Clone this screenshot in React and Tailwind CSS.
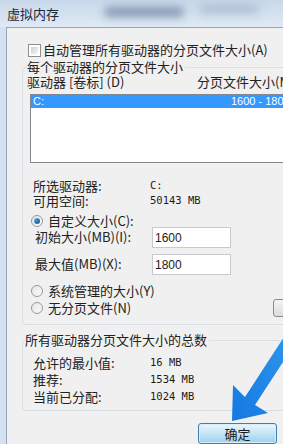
import React from 'react';

const cjk = { fontFamily: '"Noto Sans CJK SC", "Liberation Sans", sans-serif' };
const mono = { fontFamily: '"DejaVu Sans Mono", "Liberation Mono", monospace' };

const Radio = ({ checked }) => (
  <span className="w-[12px] h-[12px] rounded-full border border-[#959aa0] bg-gradient-to-br from-[#e4e6e8] to-[#fbfbfb] flex items-center justify-center shrink-0">
    {checked && (
      <span className="w-[6px] h-[6px] rounded-full bg-gradient-to-br from-[#5db4f0] to-[#124b86]" />
    )}
  </span>
);

const InfoRow = ({ label, value, h = 'h-[15px] leading-[15px]' }) => (
  <div className={`flex items-center ${h}`}>
    <span className="w-[117px] text-[13px] text-[#222]" style={cjk}>{label}</span>
    <span className="text-[10.5px] text-[#1a1a1a]" style={mono}>{value}</span>
  </div>
);

const SizeInput = ({ label, value, className = '' }) => (
  <div className={`flex items-center h-[21px] pl-[8px] ${className}`}>
    <span className="w-[117px] text-[13px] leading-[14px] text-[#222] pb-[2px]" style={cjk}>{label}</span>
    <div className="w-[79px] h-[21px] bg-white border border-[#c6cacf] flex items-center pl-[2px] text-[12px] text-[#222]" style={{ fontFamily: '"Liberation Sans", sans-serif' }}>
      {value}
    </div>
  </div>
);

export default function App() {
  return (
    <div className="relative w-[283px] h-[444px] overflow-hidden flex flex-col bg-[#d3e1f0] select-none" style={cjk}>
      {/* Title bar */}
      <div className="h-[27px] shrink-0 flex items-center bg-gradient-to-b from-[#c8d8ea] to-[#dfe9f4]">
        <span className="ml-[7px] text-[13px] text-[#1c2836]">虚拟内存</span>
        <div className="ml-[45px] mt-[-4px] w-[80px] h-[10px] rounded-full bg-[#8398b2] blur-[4px]" />
        <div className="ml-[15px] mt-[-10px] w-[60px] h-[8px] rounded-full bg-[#a9bbd0] blur-[5px]" />
      </div>

      {/* Client area */}
      <div className="flex-1 ml-[6px] border-l border-t border-[#96a6b9] bg-[#f0f0f0] overflow-hidden pl-[1px]">
        {/* Automatic checkbox */}
        <div className="mt-[14px] ml-[20px] flex items-center h-[16px] gap-[2px]">
          <span className="w-[13px] h-[13px] border border-[#8e8f8f] bg-white p-[2px] shrink-0">
            <span className="block w-full h-full bg-gradient-to-br from-[#cbcfd5] to-[#f6f6f6]" />
          </span>
          <span className="text-[13px] leading-[16px] text-[#222] whitespace-nowrap">自动管理所有驱动器的分页文件大小(A)</span>
        </div>

        {/* Per-drive group */}
        <fieldset className="mt-[2px] ml-[14px] w-[290px] border border-[#d5dfe5] rounded-[3px] pl-[4px] pb-[7px]">
          <legend className="text-[13px] leading-[14px] text-[#222] pr-[2px]">每个驱动器的分页文件大小</legend>
          <div className="mt-[2px] flex items-center h-[12px] text-[13px] text-[#222] whitespace-nowrap">
            <span className="w-[170px]">驱动器 [卷标] (D)</span>
            <span>分页文件大小(MB)</span>
          </div>

          <div className="mt-[6px] ml-[3px] w-[300px] h-[69px] border border-[#828790] bg-white">
            <div className="h-[13px] bg-[#3399ff] flex items-center text-white text-[11px] pl-[2px]" style={{ fontFamily: '"Liberation Sans", sans-serif' }}>
              <span className="w-[198px]">C:</span>
              <span>1600 - 1800</span>
            </div>
          </div>

          <div className="mt-[15px] pl-[6px]">
            <InfoRow label="所选驱动器:" value="C:" />
            <InfoRow label="可用空间:" value="50143 MB" />
          </div>

          <div className="mt-[7px] ml-[4px] flex items-center h-[12px] gap-[5px]">
            <Radio checked />
            <span className="text-[13px] leading-[12px] text-[#222]">自定义大小(C):</span>
          </div>

          <SizeInput label="初始大小(MB)(I):" value="1600" />
          <SizeInput label="最大值(MB)(X):" value="1800" className="mt-[6px]" />

          <div className="mt-[9px] ml-[4px] flex items-center h-[14px] gap-[5px]">
            <Radio />
            <span className="text-[13px] leading-[14px] text-[#222]">系统管理的大小(Y)</span>
          </div>
          <div className="mt-[1px] ml-[4px] flex items-center h-[18px]">
            <div className="w-[242px] flex items-center gap-[5px]">
              <Radio />
              <span className="text-[13px] leading-[14px] text-[#222]">无分页文件(N)</span>
            </div>
            <div className="w-[75px] h-[18px] rounded-[3px] border border-[#8b8b8b] bg-gradient-to-b from-[#f4f4f4] to-[#dcdcdc]" />
          </div>
        </fieldset>

        {/* Totals group */}
        <fieldset className="mt-[7px] ml-[14px] w-[290px] border border-[#d5dfe5] rounded-[3px] pl-[2px] pb-[5px]">
          <legend className="text-[13px] leading-[16px] text-[#222] pr-[2px]">所有驱动器分页文件大小的总数</legend>
          <div className="mt-[6px] pl-[8px]">
            <InfoRow label="允许的最小值:" value="16 MB" h="h-[17px] leading-[17px]" />
            <InfoRow label="推荐:" value="1534 MB" h="h-[17px] leading-[17px]" />
            <InfoRow label="当前已分配:" value="1024 MB" h="h-[17px] leading-[17px]" />
          </div>
        </fieldset>

        <button className="mt-[12px] ml-[190px] w-[79px] h-[21px] rounded-[3px] border border-[#3c7fb1] bg-gradient-to-b from-[#eaf6fd] via-[#c4e5f6] to-[#98d1ef] text-[13px] leading-[19px] text-[#1a1a1a] shadow-[inset_0_0_0_1px_#d8effb]">
          确定
        </button>
      </div>

      {/* Pointer arrow */}
      <svg className="absolute inset-0 pointer-events-none" width="283" height="444" viewBox="0 0 283 444">
        <defs>
          <linearGradient id="arw" x1="1" y1="0" x2="0" y2="1">
            <stop offset="0" stopColor="#2f97ee" />
            <stop offset="1" stopColor="#1579e0" />
          </linearGradient>
        </defs>
        <polygon points="232,421 233,385 245,397 286,334 296,342 255,405 268,413" fill="url(#arw)" />
      </svg>
    </div>
  );
}
